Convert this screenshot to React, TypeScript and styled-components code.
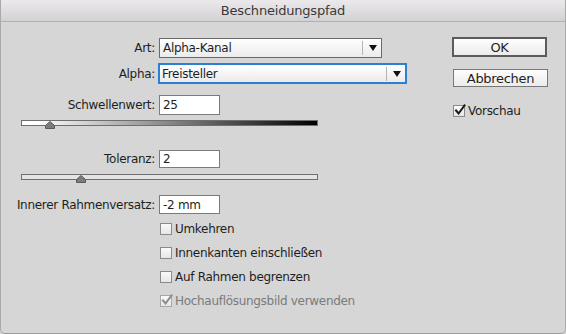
import styled, { createGlobalStyle } from 'styled-components'

const GlobalStyle = createGlobalStyle`
    html, body {
        margin: 0;
        padding: 0;
        background: #d6d6d6;
    }
    body {
        font-family: "DejaVu Sans", "Liberation Sans", sans-serif;
        font-size: 12px;
        letter-spacing: -0.3px;
        color: #1e1e1e;
    }
`

const Window = styled.div`
    width: 566px;
    height: 334px;
    box-sizing: border-box;
    background: #d6d6d6;
    border-left: 1px solid #a9a9a9;
    border-right: 1px solid #a9a9a9;
    border-bottom: 1px solid #9a9a9a;
    border-radius: 0 0 5px 5px;
    overflow: hidden;
`
const TitleBar = styled.div`
    height: 21px;
    display: flex;
    align-items: center;
    justify-content: center;
    background: linear-gradient(#ebe9eb, #d3d1d3);
    border-bottom: 1px solid #b1b1b1;
    font-size: 13px;
    letter-spacing: -0.2px;
    color: #3a3a3a;
`
const Body = styled.div`
    display: flex;
    padding-top: 16px;
`
const FormColumn = styled.div`
    width: 451px;
    display: flex;
    flex-direction: column;
`
const ButtonColumn = styled.div`
    display: flex;
    flex-direction: column;
    align-items: flex-start;
`
const Row = styled.div<{ $top?: number }>`
    display: grid;
    grid-template-columns: 154px max-content;
    column-gap: 4px;
    align-items: center;
    margin-top: ${props => props.$top ?? 0}px;
`
const Label = styled.div`
    text-align: right;
    white-space: nowrap;
`
const Select = styled.div<{ $width: number; $focused?: boolean }>`
    width: ${props => props.$width}px;
    height: ${props => props.$focused ? 21 : 20}px;
    box-sizing: border-box;
    display: flex;
    align-items: center;
    background: linear-gradient(#ffffff, #ebebeb);
    border: ${props => props.$focused ? '2px solid #2b7fd4' : '1px solid #6a6a6a'};
    padding-left: ${props => props.$focused ? 2 : 3}px;
    margin-left: ${props => props.$focused ? -1 : 0}px;
`
const SelectValue = styled.span`
    flex: 1;
`
const SelectArrow = styled.span`
    width: 18px;
    height: 14px;
    display: flex;
    align-items: center;
    justify-content: center;
    border-left: 1px solid #b4b4b4;
    &::after {
        content: '';
        border-left: 4px solid transparent;
        border-right: 4px solid transparent;
        border-top: 6px solid #111;
        margin-left: 1px;
    }
`
const TextInput = styled.div<{ $height?: number }>`
    width: 61px;
    height: ${props => props.$height ?? 20}px;
    box-sizing: border-box;
    background: #fff;
    border: 1px solid #7b7b7b;
    padding-left: 3px;
    display: flex;
    align-items: center;
`
const Track = styled.div<{ $top: number; $gradient?: boolean }>`
    position: relative;
    width: 297px;
    height: 6px;
    box-sizing: border-box;
    margin: ${props => props.$top}px 0 0 20px;
    border: 1px solid #6e6e6e;
    background: ${props => props.$gradient ? 'linear-gradient(to right, #ffffff 5%, #000000 100%)' : '#e4e4e4'};
`
const Thumb = styled.svg`
    position: absolute;
    top: 0px;
    margin-left: -5px;
`
const CheckList = styled.div<{ $top: number; $left: number }>`
    display: flex;
    flex-direction: column;
    gap: 11px;
    margin: ${props => props.$top}px 0 0 ${props => props.$left}px;
`
const CheckRow = styled.div<{ $disabled?: boolean }>`
    display: flex;
    align-items: center;
    gap: 3px;
    height: 13px;
    color: ${props => props.$disabled ? '#7a7a7a' : '#1e1e1e'};
    white-space: nowrap;
`
const Box = styled.span<{ $disabled?: boolean }>`
    position: relative;
    width: 12px;
    height: 12px;
    box-sizing: border-box;
    border: 1px solid ${props => props.$disabled ? '#a8a8a8' : '#8a8a8a'};
    background: linear-gradient(#fafafa, #e6e6e6);
    display: flex;
    align-items: center;
    justify-content: center;
`
const Button = styled.div<{ $default?: boolean; $top: number }>`
    width: 95px;
    height: ${props => props.$default ? 20 : 18}px;
    box-sizing: border-box;
    margin: ${props => props.$top}px 0 0 ${props => props.$default ? 0 : 1}px;
    display: flex;
    align-items: center;
    justify-content: center;
    font-size: 13px;
    background: linear-gradient(#fefefe, #ebebeb);
    border: ${props => props.$default ? '2px solid #5c5c5c' : '1px solid #787878'};
`

const Check = ({ color }: { color: string }) => (
    <svg width="12" height="12" viewBox="0 0 12 12" style={{ position: 'absolute', left: 0, top: -2 }}>
        <path d="M2 6.5 L4.6 9.5 L10.5 1.5" fill="none" stroke={color} strokeWidth="2" strokeLinecap="square" />
    </svg>
)

const Slider = ({ top, position, gradient }: { top: number; position: number; gradient?: boolean }) => (
    <Track $top={top} $gradient={gradient}>
        <Thumb width="10" height="8" viewBox="0 0 10 8" style={{ left: position }}>
            <path d="M5 0.5 L9.5 4.5 L9.5 7.5 L0.5 7.5 L0.5 4.5 Z" fill="#7c7c7c" stroke="#5a5a5a" strokeWidth="1" />
        </Thumb>
    </Track>
)

const CheckItem = ({ label, checked, disabled }: { label: string; checked?: boolean; disabled?: boolean }) => (
    <CheckRow $disabled={disabled}>
        <Box $disabled={disabled}>
            {checked && <Check color={disabled ? '#8c8c8c' : '#1a1a1a'} />}
        </Box>
        {label}
    </CheckRow>
)

export default function App() {
    return (
        <>
            <GlobalStyle />
            <Window>
                <TitleBar>Beschneidungspfad</TitleBar>
                <Body>
                    <FormColumn>
                        <Row>
                            <Label>Art:</Label>
                            <Select $width={223}>
                                <SelectValue>Alpha-Kanal</SelectValue>
                                <SelectArrow />
                            </Select>
                        </Row>
                        <Row $top={5}>
                            <Label>Alpha:</Label>
                            <Select $width={249} $focused>
                                <SelectValue>Freisteller</SelectValue>
                                <SelectArrow />
                            </Select>
                        </Row>
                        <Row $top={11}>
                            <Label>Schwellenwert:</Label>
                            <TextInput>25</TextInput>
                        </Row>
                        <Slider top={5} position={28} gradient />
                        <Row $top={24}>
                            <Label>Toleranz:</Label>
                            <TextInput $height={18}>2</TextInput>
                        </Row>
                        <Slider top={6} position={59} />
                        <Row $top={15}>
                            <Label>Innerer Rahmenversatz:</Label>
                            <TextInput $height={19}>-2 mm</TextInput>
                        </Row>
                        <CheckList $top={8} $left={159}>
                            <CheckItem label="Umkehren" />
                            <CheckItem label="Innenkanten einschließen" />
                            <CheckItem label="Auf Rahmen begrenzen" />
                            <CheckItem label="Hochauflösungsbild verwenden" checked disabled />
                        </CheckList>
                    </FormColumn>
                    <ButtonColumn>
                        <Button $default $top={-1}>OK</Button>
                        <Button $top={12}>Abbrechen</Button>
                        <CheckList $top={17} $left={1}>
                            <CheckItem label="Vorschau" checked />
                        </CheckList>
                    </ButtonColumn>
                </Body>
            </Window>
        </>
    )
}
